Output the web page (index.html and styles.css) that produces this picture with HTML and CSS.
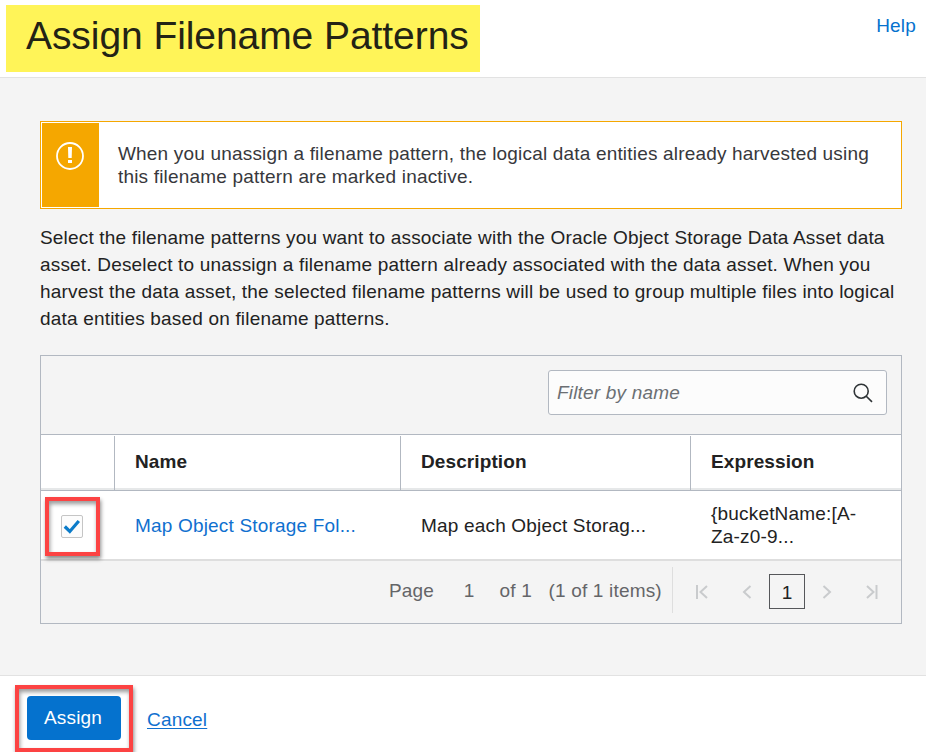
FILE: index.html
```html
<!DOCTYPE html>
<html lang="en">
<head>
<meta charset="utf-8">
<title>Assign Filename Patterns</title>
<link rel="stylesheet" href="styles.css">
</head>
<body>
<div class="dialog">
  <header class="header">
    <h1 class="title"><span>Assign Filename Patterns</span></h1>
    <a class="help">Help</a>
  </header>
  <main class="content">
    <section class="alert">
      <div class="alert-icon">
        <svg width="28" height="28" viewBox="0 0 28 28"><circle cx="14" cy="14" r="13" fill="none" stroke="#fff" stroke-width="1.800"/><path d="M12 5h4l-.3 11h-3.400zM12 18h4v3h-4z" fill="#fff"/></svg>
      </div>
      <p class="alert-text">When you unassign a filename pattern, the logical data entities already harvested using<br>this filename pattern are marked inactive.</p>
    </section>
    <p class="intro">Select the filename patterns you want to associate with the Oracle Object Storage Data Asset data<br>asset. Deselect to unassign a filename pattern already associated with the data asset. When you<br>harvest the data asset, the selected filename patterns will be used to group multiple files into logical<br>data entities based on filename patterns.</p>
    <section class="panel">
      <div class="toolbar">
        <div class="filter">
          <span class="placeholder">Filter by name</span>
          <svg width="20" height="20" viewBox="0 0 20 20" fill="none" stroke="#2f3437" stroke-width="1.600"><circle cx="8.200" cy="8.200" r="7"/><path d="M13 13l6 5.800"/></svg>
        </div>
      </div>
      <div class="row head">
        <div class="cell"></div>
        <div class="cell">Name</div>
        <div class="cell">Description</div>
        <div class="cell">Expression</div>
      </div>
      <div class="row item">
        <div class="cell check-cell">
          <div class="mark">
            <div class="checkbox"><svg width="22" height="22" viewBox="0 0 22 22"><path d="M3.800 11.500l5 5 9-10.500" fill="none" stroke="#0b7bc9" stroke-width="3.200"/></svg></div>
          </div>
        </div>
        <div class="cell link">Map Object Storage Fol...</div>
        <div class="cell">Map each Object Storag...</div>
        <div class="cell expr">{bucketName:[A-<br>Za-z0-9...</div>
      </div>
      <div class="pager">
        <span class="p-page">Page</span><span class="p-num">1</span><span class="p-of">of 1</span><span class="p-items">(1 of 1 items)</span>
        <div class="nav">
          <svg class="n-first" width="14" height="16" viewBox="0 0 14 16"><path d="M2 1v14M12 2L5.500 8l6.500 6"/></svg>
          <svg class="n-prev" width="14" height="16" viewBox="0 0 14 16"><path d="M10.500 2L4 8l6.500 6"/></svg>
          <span class="current">1</span>
          <svg class="n-next" width="14" height="16" viewBox="0 0 14 16"><path d="M3.500 2L10 8l-6.500 6"/></svg>
          <svg class="n-last" width="14" height="16" viewBox="0 0 14 16"><path d="M11.500 1v14M2 2l6.500 6L2 14"/></svg>
        </div>
      </div>
    </section>
  </main>
  <footer class="footer">
    <div class="mark assign-mark"><button class="assign">Assign</button></div>
    <a class="cancel">Cancel</a>
  </footer>
</div>
</body>
</html>
```
FILE: styles.css
```css
* { box-sizing: border-box; }
body {
  margin: 0;
  background: #fff;
  color: #222;
  font: 19px/23px "Liberation Sans", Arial, sans-serif;
  letter-spacing: .182px;
}
h1, p { margin: 0; }
.dialog {
  display: flex;
  flex-direction: column;
  width: 926px;
  height: 752px;
  overflow: hidden;
}
.header {
  display: flex;
  flex: none;
  justify-content: space-between;
  height: 78px;
  padding: 5px 10px 0 6px;
  border-bottom: 1px solid #e2e2e2;
}
.title {
  width: 474px;
  height: 67px;
  padding-left: 20px;
  background: #fff458;
  color: #232315;
  font-size: 39px;
  font-weight: 400;
  line-height: 62px;
  letter-spacing: -.07px;
  white-space: nowrap;
}
.help { margin-top: 9px; color: #0572ce; }
.content {
  flex: none;
  height: 598px;
  padding: 43px 24px 0 40px;
  background: #f4f4f4;
  border-bottom: 1px solid #e2e2e2;
}
.alert {
  display: flex;
  height: 88px;
  padding: 1px;
  border: 1px solid #f5a700;
  background: #fff;
}
.alert-icon {
  width: 57px;
  padding: 19px 0 0 14px;
  background: #f5a700;
}
.alert-text { padding: 19px 0 0 19px; color: #37383c; white-space: nowrap; }
.intro { margin-top: 15px; line-height: 27px; white-space: nowrap; }
.panel {
  height: 269px;
  margin-top: 23px;
  border: 1px solid #b2b8c1;
}
.toolbar {
  display: flex;
  justify-content: flex-end;
  height: 79px;
  padding: 14px;
  border-bottom: 1px solid #b2b8c1;
}
.filter {
  display: flex;
  justify-content: space-between;
  align-items: center;
  width: 339px;
  height: 45px;
  padding: 0 13px 0 8px;
  border: 1px solid #b2b8c1;
  border-radius: 3px;
  background: #fcfcfc;
}
.placeholder { color: #6b6f73; font-style: italic; }
.row {
  display: grid;
  grid-template-columns: 74px 286px 290px 1fr;
  background: #fff;
}
.cell { padding-left: 20px; white-space: nowrap; }
.head {
  height: 56px;
  padding-top: 1px;
  border-bottom: 1px solid #b2b8c1;
  box-shadow: inset 0 -2px #e6e8e9;
  font-weight: 700;
  letter-spacing: .1px;
}
.head .cell { padding-top: 14px; border-right: 1px solid #b2b8c1; }
.head .cell:last-child { border-right: 0; }
.item { height: 70px; border-bottom: 2px solid #dedede; align-items: center; }
.check-cell { padding-left: 4px; }
.link, .cancel { color: #0f70cf; }
.mark {
  border: 4px solid #fc4343;
  box-shadow: 1px 3px 4px rgba(0,0,0,.45), inset 1px 3px 4px rgba(0,0,0,.4);
}
.check-cell .mark { width: 55px; height: 59px; padding: 14px 0 0 12px; margin-top: 3px; }
.checkbox {
  width: 22px;
  height: 23px;
  border: 1px solid #c5c5c5;
  border-radius: 2px;
  background: #fcfcfc;
}
.checkbox svg { display: block; margin: -1px; }
.pager {
  display: flex;
  align-items: center;
  height: 62px;
  padding: 0 21px 4px 348px;
  color: #646568;
  white-space: nowrap;
}
.p-page { width: 75px; }
.p-num { width: 36px; }
.p-of { width: 49px; }
.p-items { width: 123px; }
.nav {
  display: flex;
  flex: none;
  align-items: center;
  width: 208px;
  height: 46px;
  margin-left: 1px;
  padding: 3px 0 0 22px;
  border-left: 1px solid #dedede;
}
.nav svg { flex: none; fill: none; stroke: #c9cbcd; stroke-width: 2; }
.n-prev { margin-left: 31px; }
.current {
  width: 36px;
  height: 35px;
  margin: 0 15px;
  border: 1px solid #55575a;
  color: #222;
  line-height: 35px;
  text-align: center;
}
.n-last { margin-left: 31px; }
.footer { display: flex; padding: 9px 0 0 15px; }
.assign-mark { width: 118px; height: 67px; flex: none; padding: 7px 8px; }
.assign {
  display: block;
  width: 94px;
  height: 44px;
  padding: 0 2px 2px 0;
  border: 0;
  border-radius: 4px;
  background: #0572ce;
  color: #fff;
  font: inherit;
  letter-spacing: inherit;
}
.cancel { margin: 23px 0 0 14px; text-decoration: underline; text-underline-offset: 2px; }
```
